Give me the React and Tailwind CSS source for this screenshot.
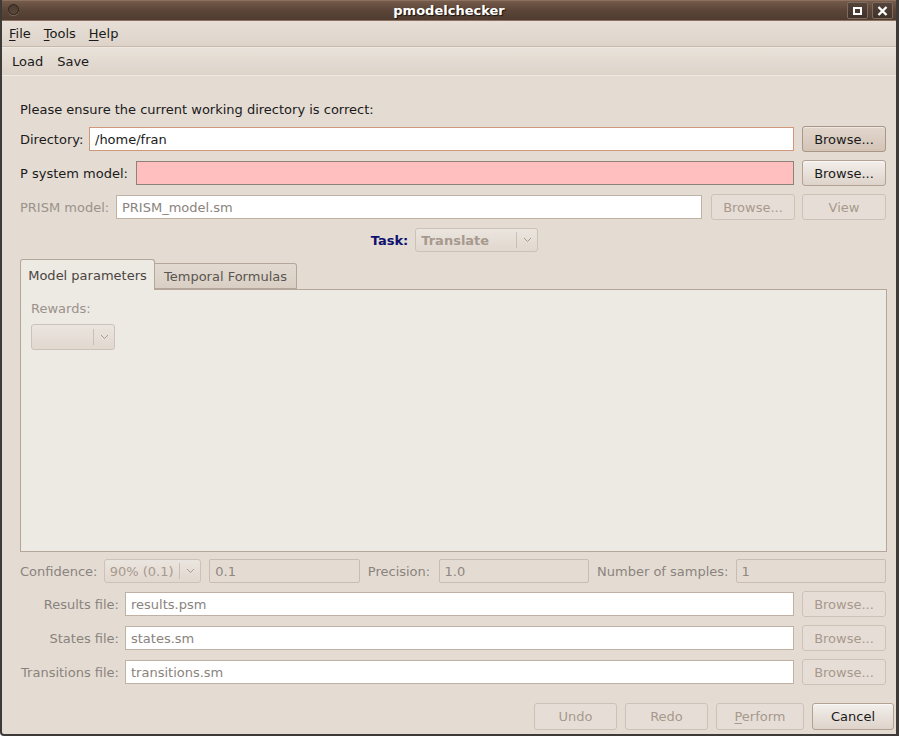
import React from "react";

function Btn({ children, className = "", disabled = false, pressed = false }) {
  let cls =
    "flex items-center justify-center h-[26px] rounded-[3px] border text-[13px] ";
  if (disabled) {
    cls += "border-[#cdc2b7] bg-[#e6ded6] text-[#a7998d] ";
  } else if (pressed) {
    cls +=
      "border-[#a89686] bg-gradient-to-b from-[#e2d6cc] to-[#d3c4b7] text-[#1a1a1a] shadow-[inset_0_1px_0_#efe7e0] ";
  } else {
    cls +=
      "border-[#b3a292] bg-gradient-to-b from-[#f3efeb] to-[#ddd3ca] text-[#1a1a1a] shadow-[inset_0_1px_0_#fbf9f7] ";
  }
  return <div className={cls + className}>{children}</div>;
}

function Input({ value = "", className = "", disabled = false, variant = "" }) {
  let cls = "h-[24px] flex items-center px-[5px] border text-[13px] ";
  if (variant === "focus") cls += "border-[#cf987a] bg-white text-[#1a1a1a] ";
  else if (variant === "error") cls += "border-[#8d837a] bg-[#ffbfbf] text-[#1a1a1a] ";
  else if (disabled) cls += "border-[#c9bdb1] bg-[#e4dcd3] text-[#8f8780] rounded-[2px] ";
  else cls += "border-[#bfb1a4] bg-white text-[#8a837d] ";
  return <div className={cls + className}>{value}</div>;
}

function Chevron() {
  return (
    <svg width="9" height="6" viewBox="0 0 9 6" className="block">
      <path d="M1 1 L4.5 4.5 L8 1" fill="none" stroke="#a99b8f" strokeWidth="1" />
    </svg>
  );
}

function Combo({ text = "", className = "", bold = false }) {
  return (
    <div
      className={
        "h-[24px] flex items-center rounded-[3px] border border-[#cdc2b7] bg-gradient-to-b from-[#ebe5df] to-[#e1d8cf] text-[13px] text-[#a7998d] " +
        className
      }
    >
      <div className={"flex-1 px-[5px] " + (bold ? "font-bold" : "")}>{text}</div>
      <div className="w-px h-[16px] bg-[#cbbfb3]" />
      <div className="w-[20px] flex items-center justify-center">
        <Chevron />
      </div>
    </div>
  );
}

export default function App() {
  return (
    <div className="w-[899px] h-[736px] bg-white font-['DejaVu_Sans',sans-serif] text-[13px] text-[#1a1a1a] leading-none">
      <div className="w-[899px] h-[736px] flex flex-col bg-[#e4dcd3] border-l-2 border-r-[3px] border-b-2 border-[#3d3a37] rounded-bl-[4px] overflow-hidden">
        {/* Title bar */}
        <div className="relative h-[21px] shrink-0 bg-gradient-to-b from-[#745b4b] via-[#5b4538] to-[#4f3c31] border-t border-[#8d705e] border-b border-[#3a2c24] flex items-center justify-center">
          <div className="absolute left-[6px] top-[3px] w-[11px] h-[11px] rounded-full border border-[#2e241e] bg-gradient-to-b from-[#4a3a30] to-[#5e4a3d] shadow-[0_1px_0_#7a6251]" />
          <span className="text-white font-bold text-[13px] [text-shadow:1px_1px_1px_#1b130e]">
            pmodelchecker
          </span>
          <div className="absolute right-[28px] top-[1px] w-[21px] h-[17px] rounded-[2px] border border-[#7f6b5d] bg-gradient-to-b from-[#55443a] to-[#3f3129] flex items-center justify-center">
            <div className="w-[9px] h-[8px] border-2 border-white" />
          </div>
          <div className="absolute right-[3px] top-[1px] w-[21px] h-[17px] rounded-[2px] border border-[#7f6b5d] bg-gradient-to-b from-[#55443a] to-[#3f3129] flex items-center justify-center">
            <svg width="11" height="10" viewBox="0 0 11 10">
              <path d="M1.5 1 L9.5 9 M9.5 1 L1.5 9" stroke="white" strokeWidth="2.4" />
            </svg>
          </div>
        </div>

        {/* Menu bar */}
        <div className="h-[26px] shrink-0 bg-gradient-to-b from-[#e7dfd7] to-[#ddd3c9] border-b border-[#c8b9ab] flex items-center pl-[7px] gap-[13px]">
          <span>
            <span className="underline underline-offset-2">F</span>ile
          </span>
          <span>
            <span className="underline underline-offset-2">T</span>ools
          </span>
          <span>
            <span className="underline underline-offset-2">H</span>elp
          </span>
        </div>

        {/* Toolbar */}
        <div className="h-[29px] shrink-0 bg-gradient-to-b from-[#e9e2da] to-[#ddd3c9] border-t border-[#efe9e3] border-b border-[#c8b9ab] flex items-center pl-[10px] gap-[14px]">
          <span>Load</span>
          <span>Save</span>
        </div>

        {/* Content */}
        <div className="flex-1 flex flex-col pl-[18px] pr-[10px] pt-[25px]">
          <div className="h-[16px] flex items-center">
            Please ensure the current working directory is correct:
          </div>

          <div className="mt-[9px] h-[26px] flex items-center">
            <span className="w-[69px]">Directory:</span>
            <Input value="/home/fran" variant="focus" className="flex-1" />
            <Btn pressed className="ml-[8px] w-[84px]">Browse...</Btn>
          </div>

          <div className="mt-[8px] h-[26px] flex items-center">
            <span className="w-[116px]">P system model:</span>
            <Input variant="error" className="flex-1" />
            <Btn className="ml-[8px] w-[84px]">Browse...</Btn>
          </div>

          <div className="mt-[8px] h-[26px] flex items-center">
            <span className="w-[96px] text-[#9a928b]">PRISM model:</span>
            <Input value="PRISM_model.sm" className="flex-1" />
            <Btn disabled className="ml-[9px] w-[84px]">Browse...</Btn>
            <Btn disabled className="ml-[7px] w-[84px]">View</Btn>
          </div>

          <div className="mt-[8px] h-[24px] flex items-center justify-center pl-[3px]">
            <span className="font-bold text-[#101070] mr-[7px]">Task:</span>
            <Combo text="Translate" bold className="w-[123px]" />
          </div>

          {/* Tabs */}
          <div className="mt-[8px] flex flex-col h-[292px] mr-[-1px]">
            <div className="h-[30px] flex items-end relative z-10">
              <div className="h-[31px] w-[135px] bg-[#ede9e3] border border-b-0 border-[#b4a799] rounded-t-[3px] flex items-center justify-center text-[#4a4541]">
                Model parameters
              </div>
              <div className="h-[26px] w-[142px] bg-gradient-to-b from-[#e2dad1] to-[#d9cfc5] border border-l-0 border-[#b4a799] rounded-tr-[3px] flex items-center justify-center text-[#5a5550] mb-[1px]">
                Temporal Formulas
              </div>
            </div>
            <div className="flex-1 -mt-px bg-[#ede9e3] border border-[#b4a799] pl-[10px] pt-[11px]">
              <div className="text-[#9a928b] h-[14px] flex items-center">Rewards:</div>
              <Combo className="mt-[9px] w-[84px] h-[26px]" />
            </div>
          </div>

          {/* Confidence row */}
          <div className="mt-[7px] h-[24px] flex items-center text-[#8a837d]">
            <span className="w-[84px]">Confidence:</span>
            <Combo text="90% (0.1)" className="w-[98px] font-normal" />
            <Input disabled value="0.1" className="ml-[8px] w-[151px]" />
            <span className="ml-[8px] w-[71px]">Precision:</span>
            <Input disabled value="1.0" className="w-[151px]" />
            <span className="ml-[8px] w-[139px]">Number of samples:</span>
            <Input disabled value="1" className="w-[151px]" />
          </div>

          <div className="mt-[8px] h-[26px] flex items-center">
            <span className="w-[100px] text-right pr-[1px] text-[#8a837d]">Results file:</span>
            <Input value="results.psm" className="ml-[5px] flex-1 text-[#1a1a1a]" />
            <Btn disabled className="ml-[8px] w-[84px]">Browse...</Btn>
          </div>
          <div className="mt-[8px] h-[26px] flex items-center">
            <span className="w-[100px] text-right pr-[1px] text-[#8a837d]">States file:</span>
            <Input value="states.sm" className="ml-[5px] flex-1" />
            <Btn disabled className="ml-[8px] w-[84px]">Browse...</Btn>
          </div>
          <div className="mt-[8px] h-[26px] flex items-center">
            <span className="w-[100px] text-right pr-[1px] text-[#8a837d]">Transitions file:</span>
            <Input value="transitions.sm" className="ml-[5px] flex-1" />
            <Btn disabled className="ml-[8px] w-[84px]">Browse...</Btn>
          </div>

          {/* Bottom buttons */}
          <div className="mt-[18px] flex justify-end gap-[8px] mr-[-8px]">
            <Btn disabled className="w-[83px] h-[27px]">Undo</Btn>
            <Btn disabled className="w-[83px] h-[27px]">Redo</Btn>
            <Btn disabled className="w-[88px] h-[27px]">
              <span>
                <span className="underline underline-offset-2">P</span>erform
              </span>
            </Btn>
            <Btn className="w-[82px] h-[27px]">Cancel</Btn>
          </div>
        </div>
      </div>
    </div>
  );
}
